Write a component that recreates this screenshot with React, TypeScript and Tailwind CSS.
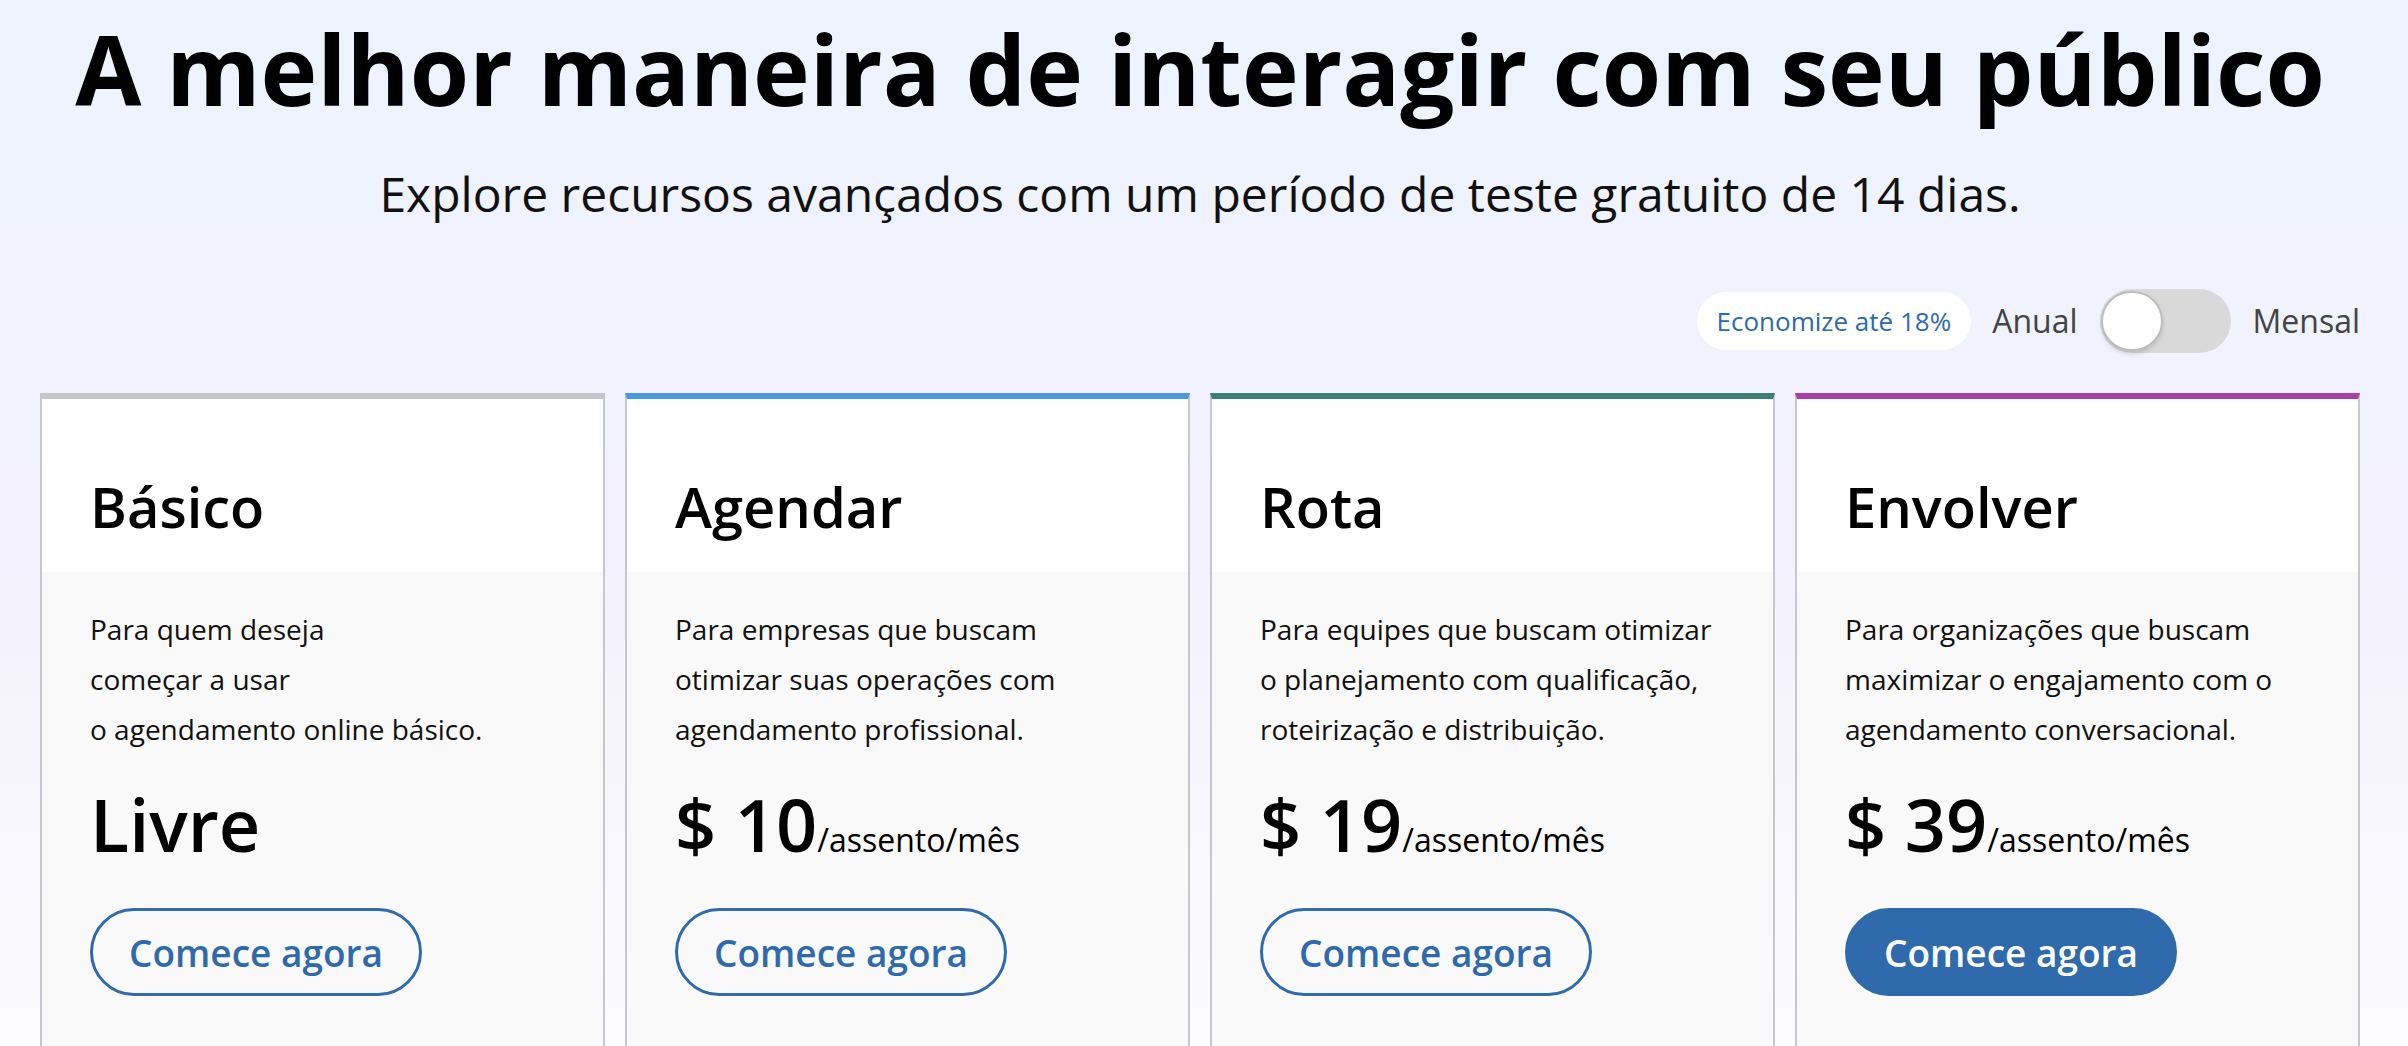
import React from "react";

type Plan = {
  name: string;
  desc: string[];
  price: string;
  unit?: string;
  bar: string;
  filled?: boolean;
};

const plans: Plan[] = [
  {
    name: "Básico",
    desc: ["Para quem deseja", "começar a usar", "o agendamento online básico."],
    price: "Livre",
    bar: "border-t-[#c6c6ca]",
  },
  {
    name: "Agendar",
    desc: ["Para empresas que buscam", "otimizar suas operações com", "agendamento profissional."],
    price: "$ 10",
    unit: "/assento/mês",
    bar: "border-t-[#4a9ade]",
  },
  {
    name: "Rota",
    desc: ["Para equipes que buscam otimizar", "o planejamento com qualificação,", "roteirização e distribuição."],
    price: "$ 19",
    unit: "/assento/mês",
    bar: "border-t-[#3a7f78]",
  },
  {
    name: "Envolver",
    desc: ["Para organizações que buscam", "maximizar o engajamento com o", "agendamento conversacional."],
    price: "$ 39",
    unit: "/assento/mês",
    bar: "border-t-[#a93fa4]",
    filled: true,
  },
];

function Card({ plan }: { plan: Plan }) {
  return (
    <div className={`flex flex-col border-x-2 border-x-[#c5c8ce] border-t-[6px] ${plan.bar} bg-[#f9f9f9]`}>
      <div className="bg-white px-12 pt-[74px] pb-[32px]">
        <h2 className="text-[56px] leading-[67px] font-semibold text-black">{plan.name}</h2>
      </div>
      <div className="px-12 pt-[32px] pb-[120px]">
        <p className="text-[28px] leading-[50px] text-[#111]">
          {plan.desc.map((l, i) => (
            <span key={i} className="block whitespace-nowrap">
              {l}
            </span>
          ))}
        </p>
        <div className="mt-[34px] leading-none text-black whitespace-nowrap">
          <span className="text-[72px] font-semibold">{plan.price}</span>
          {plan.unit && <span className="text-[32px]">{plan.unit}</span>}
        </div>
        <div className="mt-[48px]">
          <button
            className={`h-[88px] rounded-full border-[3px] border-[#2e6aac] px-[36px] text-[37px] leading-[37px] font-semibold ${
              plan.filled ? "bg-[#2e6aac] text-white" : "bg-transparent text-[#2e6aac]"
            }`}
          >
            Comece agora
          </button>
        </div>
      </div>
    </div>
  );
}

export default function App() {
  return (
    <div
      className="min-h-[1046px] w-full overflow-hidden bg-gradient-to-b from-[#edf4ff] via-[#f3f1fd] to-[#fefeff]"
      style={{ fontFamily: '"Open Sans", "Noto Sans", sans-serif' }}
    >
      <div className="pl-[40px] pr-[48px]">
        <h1 className="pt-[9px] text-center text-[96px] leading-[120px] font-bold text-black whitespace-nowrap">
          A melhor maneira de interagir com seu público
        </h1>
        <p className="mt-[35px] text-center text-[48px] leading-[60px] text-[#111] whitespace-nowrap">
          Explore recursos avançados com um período de teste gratuito de 14 dias.
        </p>
        <div className="mt-[65px] flex h-[64px] items-center justify-end">
          <span className="flex h-[58px] items-center rounded-full bg-white px-[20px] text-[26px] text-[#2e6aac]">
            Economize até 18%
          </span>
          <span className="ml-[21px] text-[32px] text-[#444]">Anual</span>
          <div className="relative ml-[22px] h-[64px] w-[131px] rounded-full bg-[#d9d9d9]">
            <div className="absolute left-[1px] top-[2px] h-[60px] w-[62px] rounded-full border-2 border-[#bdbdbd] bg-white shadow-[0_3px_4px_rgba(0,0,0,0.12)]" />
          </div>
          <span className="ml-[22px] text-[32px] text-[#444]">Mensal</span>
        </div>
        <div className="mt-[40px] grid grid-cols-4 gap-[20px]">
          {plans.map((p) => (
            <Card key={p.name} plan={p} />
          ))}
        </div>
      </div>
    </div>
  );
}
